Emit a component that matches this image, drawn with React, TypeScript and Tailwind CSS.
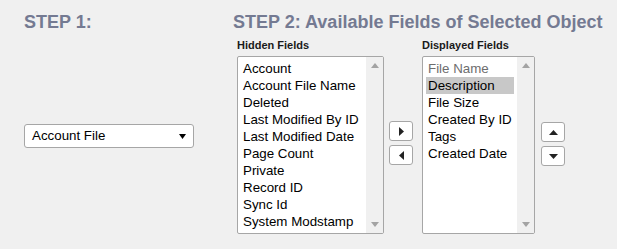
import React from "react";

const font = { fontFamily: '"Liberation Sans", Arial, sans-serif' };

function ListBox({ items, width, selected, disabled }: { items: string[]; width: number; selected?: number; disabled?: number }) {
  return (
    <div className="relative flex h-[178px] border border-[#a6a6a6] rounded-[2px] bg-white overflow-hidden" style={{ width }}>
      <div className="flex-1 pt-[3px] pl-[3px] pr-[3px]">
        {items.map((it, i) => (
          <div
            key={it}
            className={
              "h-[17px] leading-[17px] px-[2px] text-[13.33px] whitespace-nowrap " +
              (i === selected ? "bg-[#c8c8c8] " : "") +
              (i === disabled ? "text-[#6d6d6d]" : "text-black")
            }
          >
            {it}
          </div>
        ))}
      </div>
      <div className="w-[17px] h-full bg-[#f0f0f0] flex flex-col justify-between items-center py-[6px]">
        <svg width="8" height="5" viewBox="0 0 8 5"><path d="M4 0 L8 5 L0 5 Z" fill="#a3a3a3" /></svg>
        <svg width="8" height="5" viewBox="0 0 8 5"><path d="M0 0 L8 0 L4 5 Z" fill="#a3a3a3" /></svg>
      </div>
    </div>
  );
}

function Btn({ dir }: { dir: "right" | "left" | "up" | "down" }) {
  const paths: Record<string, React.ReactNode> = {
    right: <svg width="5" height="9" viewBox="0 0 5 9"><path d="M0 0 L5 4.5 L0 9 Z" fill="#222" /></svg>,
    left: <svg width="5" height="9" viewBox="0 0 5 9"><path d="M5 0 L0 4.5 L5 9 Z" fill="#222" /></svg>,
    up: <svg width="9" height="5" viewBox="0 0 9 5"><path d="M4.5 0 L9 5 L0 5 Z" fill="#222" /></svg>,
    down: <svg width="9" height="5" viewBox="0 0 9 5"><path d="M0 0 L9 0 L4.5 5 Z" fill="#222" /></svg>,
  };
  return (
    <div className="w-[24px] h-[20px] border border-[#a6a6a6] rounded-[3px] bg-white flex items-center justify-center">
      {paths[dir]}
    </div>
  );
}

export default function App() {
  const hidden = [
    "Account",
    "Account File Name",
    "Deleted",
    "Last Modified By ID",
    "Last Modified Date",
    "Page Count",
    "Private",
    "Record ID",
    "Sync Id",
    "System Modstamp",
  ];
  const displayed = ["File Name", "Description", "File Size", "Created By ID", "Tags", "Created Date"];
  return (
    <div className="w-[617px] h-[249px] bg-[#f0f0f0] flex overflow-hidden" style={font}>
      <div className="w-[233px] pl-[24px] shrink-0">
        <div className="pt-[11px] leading-[22px] text-[18px] font-bold text-[#747a92]">STEP 1:</div>
        <div className="mt-[91px] w-[170px] h-[24px] border border-[#a6a6a6] rounded-[3px] bg-white flex items-center justify-between pl-[7px] pr-[7px]">
          <span className="text-[13.33px] text-black">Account File</span>
          <svg width="7" height="5" viewBox="0 0 7 5"><path d="M0 0 L7 0 L3.5 5 Z" fill="#000" /></svg>
        </div>
      </div>
      <div className="flex flex-col">
        <div className="pt-[11px] leading-[22px] text-[18px] font-bold text-[#747a92] whitespace-nowrap">
          STEP 2: Available Fields of Selected Object
        </div>
        <div className="flex pl-[4px] mt-[6px]">
          <div className="flex flex-col">
            <div className="h-[13px] leading-[13px] text-[11px] font-bold text-[#1a1a1a] mb-[4px]">Hidden Fields</div>
            <ListBox items={hidden} width={147} />
          </div>
          <div className="ml-[5px] mt-[82px] flex flex-col gap-[4px]">
            <Btn dir="right" />
            <Btn dir="left" />
          </div>
          <div className="flex flex-col ml-[9px]">
            <div className="h-[13px] leading-[13px] text-[11px] font-bold text-[#1a1a1a] mb-[4px]">Displayed Fields</div>
            <ListBox items={displayed} width={113} selected={1} disabled={0} />
          </div>
          <div className="ml-[6px] mt-[83px] flex flex-col gap-[4px]">
            <Btn dir="up" />
            <Btn dir="down" />
          </div>
        </div>
      </div>
    </div>
  );
}
